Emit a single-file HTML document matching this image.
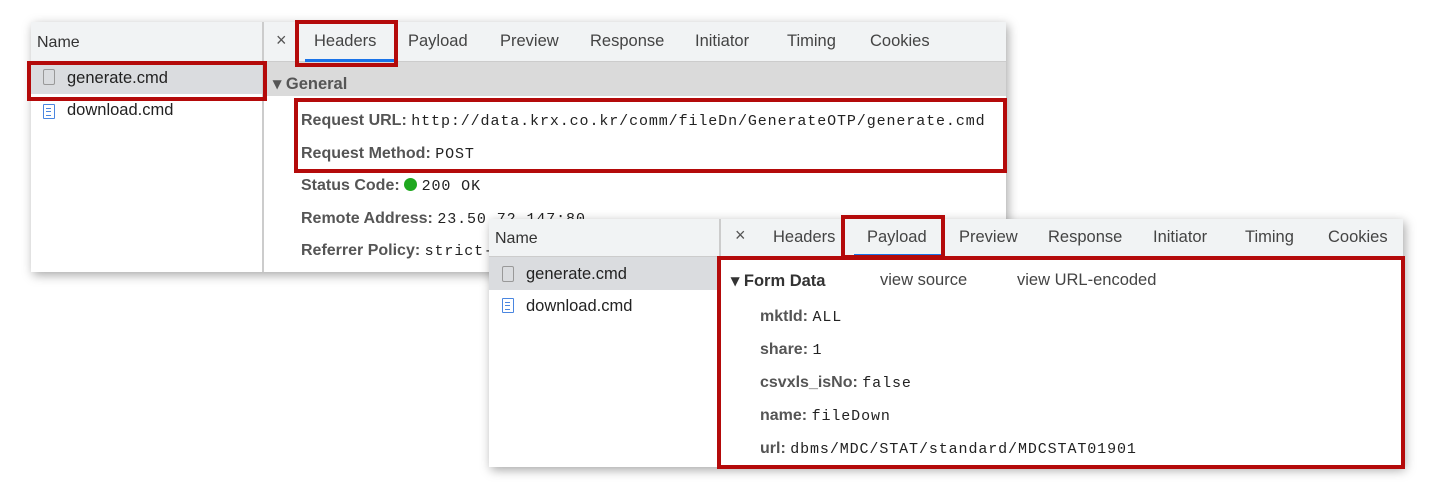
<!DOCTYPE html>
<html><head><meta charset="utf-8"><style>
*{margin:0;padding:0;box-sizing:border-box}
body{width:1439px;height:491px;background:#fff;position:relative;overflow:hidden;font-family:"Liberation Sans",sans-serif;color:#333}
.a{position:absolute;white-space:nowrap}
.win{position:absolute;background:#fff;box-shadow:2px 3px 10px rgba(0,0,0,.35)}
.mono{font-family:"Liberation Mono",monospace;font-size:15px;letter-spacing:0.9px;color:#222;font-weight:normal}
.red{position:absolute;border:4px solid #b40a0a}
.tab{font-size:16.5px;color:#444}
.lbl{font-size:16px;color:#555;font-weight:bold}
.doc{position:absolute;width:12px;height:15px;border:1.5px solid #4a86e0;border-radius:1px}
.doc:after{content:"";position:absolute;left:2px;top:3px;width:5px;height:6px;border-top:1.5px solid #4a86e0;border-bottom:1.5px solid #4a86e0}
.doc:before{content:"";position:absolute;left:2px;top:6px;width:5px;border-top:1.5px solid #4a86e0}
.blank{position:absolute;width:12px;height:16px;border:1.5px solid #999;border-radius:2px}
</style></head><body>

<!-- window 1 -->
<div class="win" style="left:31px;top:22px;width:975px;height:250px">
  <div class="a" style="left:0;top:0;width:975px;height:40px;background:#f1f3f4;border-bottom:1px solid #ccc"></div>
  <div class="a" style="left:231px;top:0;width:2px;height:250px;background:#ccc"></div>
  <div class="a" style="left:0;top:40px;width:231px;height:32px;background:#dadcdf"></div>
  <div class="a" style="left:233px;top:40px;width:742px;height:34px;background:#dadada"></div>
  <div class="a" style="left:6px;top:12px;font-size:16px;color:#333">Name</div>
  <div class="blank" style="left:12px;top:47px"></div>
  <div class="a" style="left:36px;top:47px;font-size:16.5px;color:#222">generate.cmd</div>
  <div class="doc" style="left:12px;top:82px"></div>
  <div class="a" style="left:36px;top:79px;font-size:16.5px;color:#222">download.cmd</div>
  <div class="a" style="left:245px;top:8px;font-size:18px;color:#555">×</div>
  <div class="a tab" style="left:283px;top:10px">Headers</div>
  <div class="a" style="left:274px;top:37px;width:90px;height:3px;background:#1a73e8"></div>
  <div class="a tab" style="left:377px;top:10px">Payload</div>
  <div class="a tab" style="left:469px;top:10px">Preview</div>
  <div class="a tab" style="left:559px;top:10px">Response</div>
  <div class="a tab" style="left:664px;top:10px">Initiator</div>
  <div class="a tab" style="left:756px;top:10px">Timing</div>
  <div class="a tab" style="left:839px;top:10px">Cookies</div>
  <div class="a" style="left:242px;top:52px;font-size:16.5px;color:#555;font-weight:bold">▾ General</div>
  <div class="a lbl" style="left:270px;top:90px">Request URL: <span class="mono">http://data.krx.co.kr/comm/fileDn/GenerateOTP/generate.cmd</span></div>
  <div class="a lbl" style="left:270px;top:123px">Request Method: <span class="mono">POST</span></div>
  <div class="a lbl" style="left:270px;top:155px">Status Code: <span style="display:inline-block;width:13px;height:13px;border-radius:50%;background:#1fa81f;vertical-align:-1px"></span> <span class="mono">200 OK</span></div>
  <div class="a lbl" style="left:270px;top:188px">Remote Address: <span class="mono">23.50.72.147:80</span></div>
  <div class="a lbl" style="left:270px;top:220px">Referrer Policy: <span class="mono">strict-origin</span></div>
</div>
<div class="red" style="left:295px;top:20px;width:103px;height:47px"></div>
<div class="red" style="left:27px;top:61px;width:240px;height:40px"></div>
<div class="red" style="left:294px;top:98px;width:713px;height:75px"></div>

<!-- window 2 -->
<div class="win" style="left:489px;top:219px;width:914px;height:248px">
  <div class="a" style="left:0;top:0;width:914px;height:38px;background:#f1f3f4;border-bottom:1px solid #ccc"></div>
  <div class="a" style="left:230px;top:0;width:2px;height:248px;background:#ccc"></div>
  <div class="a" style="left:0;top:38px;width:230px;height:33px;background:#dadcdf"></div>
  <div class="a" style="left:6px;top:11px;font-size:16px;color:#333">Name</div>
  <div class="blank" style="left:13px;top:47px"></div>
  <div class="a" style="left:37px;top:46px;font-size:16.5px;color:#222">generate.cmd</div>
  <div class="doc" style="left:13px;top:79px"></div>
  <div class="a" style="left:37px;top:78px;font-size:16.5px;color:#222">download.cmd</div>
  <div class="a" style="left:246px;top:6px;font-size:18px;color:#555">×</div>
  <div class="a tab" style="left:284px;top:9px">Headers</div>
  <div class="a tab" style="left:378px;top:9px">Payload</div>
  <div class="a" style="left:365px;top:35px;width:87px;height:3px;background:#1a73e8"></div>
  <div class="a tab" style="left:470px;top:9px">Preview</div>
  <div class="a tab" style="left:559px;top:9px">Response</div>
  <div class="a tab" style="left:664px;top:9px">Initiator</div>
  <div class="a tab" style="left:756px;top:9px">Timing</div>
  <div class="a tab" style="left:839px;top:9px">Cookies</div>
  <div class="a" style="left:242px;top:52px;font-size:16.5px;color:#333;font-weight:bold">▾ Form Data</div>
  <div class="a" style="left:391px;top:52px;font-size:16.5px;color:#444">view source</div>
  <div class="a" style="left:528px;top:52px;font-size:16.5px;color:#444">view URL-encoded</div>
  <div class="a lbl" style="left:271px;top:89px">mktId: <span class="mono">ALL</span></div>
  <div class="a lbl" style="left:271px;top:122px">share: <span class="mono">1</span></div>
  <div class="a lbl" style="left:271px;top:155px">csvxls_isNo: <span class="mono">false</span></div>
  <div class="a lbl" style="left:271px;top:188px">name: <span class="mono">fileDown</span></div>
  <div class="a lbl" style="left:271px;top:221px">url: <span class="mono">dbms/MDC/STAT/standard/MDCSTAT01901</span></div>
</div>
<div class="red" style="left:841px;top:215px;width:104px;height:44px"></div>
<div class="red" style="left:717px;top:256px;width:688px;height:213px"></div>

</body></html>
